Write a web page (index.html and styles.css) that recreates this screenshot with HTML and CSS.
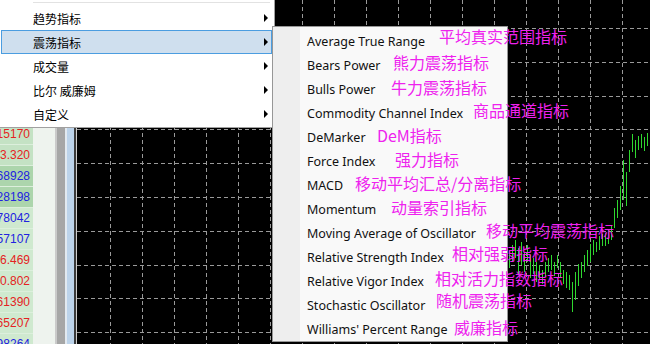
FILE: index.html
```html
<!DOCTYPE html>
<html lang="zh-CN">
<head>
    <meta charset="UTF-8">
    <meta name="viewport" content="width=device-width, initial-scale=1.0">
    <title>震荡指标</title>
    <link rel="stylesheet" href="styles.css">
</head>
<body>
    <div class="terminal">
        <div class="watch">
            <div class="cells">
                <div class="cell"></div>
                <div class="cell"></div>
                <div class="cell"></div>
                <div class="cell"></div>
                <div class="cell"></div>
                <div class="cell"></div>
                <div class="cell red">1.15170</div>
                <div class="cell red">1183.320</div>
                <div class="cell blue dark">0.68928</div>
                <div class="cell blue dark">1.28198</div>
                <div class="cell blue light">0.78042</div>
                <div class="cell blue light">1.57107</div>
                <div class="cell red light">1256.469</div>
                <div class="cell red light">1280.802</div>
                <div class="cell red light">0.61390</div>
                <div class="cell red light">1.65207</div>
                <div class="cell blue light">0.98264</div>
            </div>
            <div class="pad"></div>
            <div class="split"></div>
            <div class="edge"></div>
            <div class="axis"></div>
            <div class="frame"></div>
        </div>
        <div class="chart">
            <svg width="573" height="344" viewBox="77 0 573 344">
                <path class="grid" d="M110.5 0V344M142.5 0V344M174.5 0V344M206.5 0V344M238.5 0V344M270.5 0V344M302.5 0V344M334.5 0V344M366.5 0V344M398.5 0V344M430.5 0V344M462.5 0V344M494.5 0V344M526.5 0V344M558.5 0V344M590.5 0V344M622.5 0V344
                    M77 28.5H650M77 62.5H650M77 96.5H650M77 129.5H650M77 163.5H650M77 197.5H650M77 231.5H650M77 265.5H650M77 298.5H650M77 332.5H650"/>
                <path class="bars" d="M509.5 250V268M512.5 245V262M515.5 240V258M518.5 248V275M521.5 242V265M524.5 252V272M527.5 245V262M530.5 255V278M533.5 258V274M536.5 262V282M539.5 265V280M542.5 270V284M545.5 262V277M548.5 258V272M551.5 255V270M554.5 262V276M557.5 255V268M560.5 262V278M563.5 270V284M566.5 272V288M569.5 275V290M572.5 282V312M575.5 272V300M578.5 264V286M581.5 262V278M584.5 255V272M587.5 250V266M590.5 244V262M593.5 240V255M596.5 242V252M599.5 236V250M602.5 234V246M605.5 233V246M608.5 230V244M611.5 225V240M614.5 208V228M617.5 200V218M620.5 186V210M623.5 160V200M626.5 172V206M629.5 150V172M632.5 134V152M635.5 140V158M638.5 136V150M641.5 134V148M644.5 137V151M647.5 133V146"/>
            </svg>
        </div>
    </div>

    <div class="menu">
        <div class="menu-sep"></div>
        <div class="menu-item"><span>趋势指标</span><i class="arrow"></i></div>
        <div class="menu-item active"><span>震荡指标</span><i class="arrow"></i></div>
        <div class="menu-item"><span>成交量</span><i class="arrow"></i></div>
        <div class="menu-item"><span>比尔 威廉姆</span><i class="arrow"></i></div>
        <div class="menu-item"><span>自定义</span><i class="arrow"></i></div>
    </div>

    <div class="submenu">
        <div class="sub-item">Average True Range</div>
        <div class="sub-item">Bears Power</div>
        <div class="sub-item">Bulls Power</div>
        <div class="sub-item">Commodity Channel Index</div>
        <div class="sub-item">DeMarker</div>
        <div class="sub-item">Force Index</div>
        <div class="sub-item">MACD</div>
        <div class="sub-item">Momentum</div>
        <div class="sub-item">Moving Average of Oscillator</div>
        <div class="sub-item">Relative Strength Index</div>
        <div class="sub-item">Relative Vigor Index</div>
        <div class="sub-item">Stochastic Oscillator</div>
        <div class="sub-item">Williams' Percent Range</div>
    </div>

    <!-- 注释 -->
    <div class="notes">
        <span class="note n1">平均真实范围指标</span>
        <span class="note n2">熊力震荡指标</span>
        <span class="note n3">牛力震荡指标</span>
        <span class="note n4">商品通道指标</span>
        <span class="note n5">DeM指标</span>
        <span class="note n6">强力指标</span>
        <span class="note n7">移动平均汇总/分离指标</span>
        <span class="note n8">动量索引指标</span>
        <span class="note n9">移动平均震荡指标</span>
        <span class="note n10">相对强弱指标</span>
        <span class="note n11">相对活力指数指标</span>
        <span class="note n12">随机震荡指标</span>
        <span class="note n13">威廉指标</span>
    </div>
</body>
</html>
```

FILE: styles.css
```css
*{
    box-sizing: border-box;
    margin: 0;
    padding: 0;
}
body{
    width: 650px;
    height: 344px;
    overflow: hidden;
    position: relative;
    background: #000;
    font-family: "Noto Sans", "Noto Sans CJK SC", sans-serif;
}
.terminal{
    display: flex;
    height: 344px;
}
.watch{
    display: flex;
    width: 76px;
    flex-shrink: 0;
}
.cells{
    width: 33px;
    margin-top: -2px;
    background: #cce8cc;
}
.cell{
    height: 21px;
    display: flex;
    align-items: center;
    justify-content: flex-end;
    padding-right: 3px;
    overflow: hidden;
    white-space: nowrap;
    font-family: "Liberation Sans", Arial, sans-serif;
    font-size: 12px;
    background: #c4e2c4;
    border-bottom: 1px solid #dcefdc;
}
.cell.dark{
    background: #acd5ac;
}
.cell.light{
    background: #cfe9cf;
}
.red{
    color: #e42222;
}
.blue{
    color: #2222e0;
}
.pad{
    width: 22px;
    background: #eef3ee;
}
.split{
    width: 10px;
    background: #a6a6a6;
    border-left: 2px solid #cacaca;
}
.edge{
    width: 2px;
    background: #e2e9f0;
}
.axis{
    width: 7px;
    background: #bcd3ea;
}
.frame{
    width: 2px;
    background: #3a3a3a;
}
.chart{
    flex: 1;
    background: #000;
    border-left: 1px solid #cfcfcf;
}
.chart svg{
    display: block;
}
.grid{
    fill: none;
    stroke: #9a9a9a;
    stroke-width: 1;
    stroke-dasharray: 4 3;
}
.bars{
    fill: none;
    stroke: #2fd82f;
    stroke-width: 1;
}

/* menus */
.menu{
    position: absolute;
    left: 0;
    top: 0;
    width: 275px;
    height: 128px;
    background: #fff;
    border-right: 1px solid #a0a0a0;
    border-bottom: 1px solid #a0a0a0;
    font-family: "Noto Sans CJK SC", sans-serif;
    font-size: 12px;
    color: #000;
}
.menu-sep{
    height: 1px;
    margin: 2px 4px 3px 33px;
    background: #e2e2e2;
}
.menu-item{
    height: 24px;
    margin: 0 2px 0 1px;
    padding: 0 3px 0 31px;
    border: 1px solid transparent;
    display: flex;
    align-items: center;
    justify-content: space-between;
}
.menu-item.active{
    background: #cfdfee;
    border-color: #4b9de0;
}
.arrow{
    width: 0;
    height: 0;
    border-left: 4px solid #000;
    border-top: 4px solid transparent;
    border-bottom: 4px solid transparent;
}
.submenu{
    position: absolute;
    left: 272px;
    top: 26px;
    width: 236px;
    height: 316px;
    padding-top: 2px;
    border: 1px solid #979797;
    background: linear-gradient(to right, #eeeeee 0 27px, #f9f9f9 27px);
    font-size: 12.5px;
    color: #111;
}
.sub-item{
    height: 24px;
    padding-left: 34px;
    display: flex;
    align-items: center;
    white-space: nowrap;
}

/* annotations */
.notes{
    position: absolute;
    left: 0;
    top: 0;
    width: 650px;
    height: 344px;
}
.note{
    position: absolute;
    font-family: "Noto Sans CJK SC", sans-serif;
    font-size: 16px;
    line-height: 16px;
    color: #ee22ee;
    white-space: nowrap;
}
.n1{ left: 439px; top: 28px; }
.n2{ left: 393px; top: 54px; }
.n3{ left: 391px; top: 79px; }
.n4{ left: 473px; top: 102px; }
.n5{ left: 377px; top: 127px; }
.n6{ left: 395px; top: 151px; }
.n7{ left: 355px; top: 175px; }
.n8{ left: 391px; top: 199px; }
.n9{ left: 486px; top: 222px; }
.n10{ left: 452px; top: 245px; }
.n11{ left: 435px; top: 270px; }
.n12{ left: 436px; top: 292px; }
.n13{ left: 454px; top: 319px; }
```
